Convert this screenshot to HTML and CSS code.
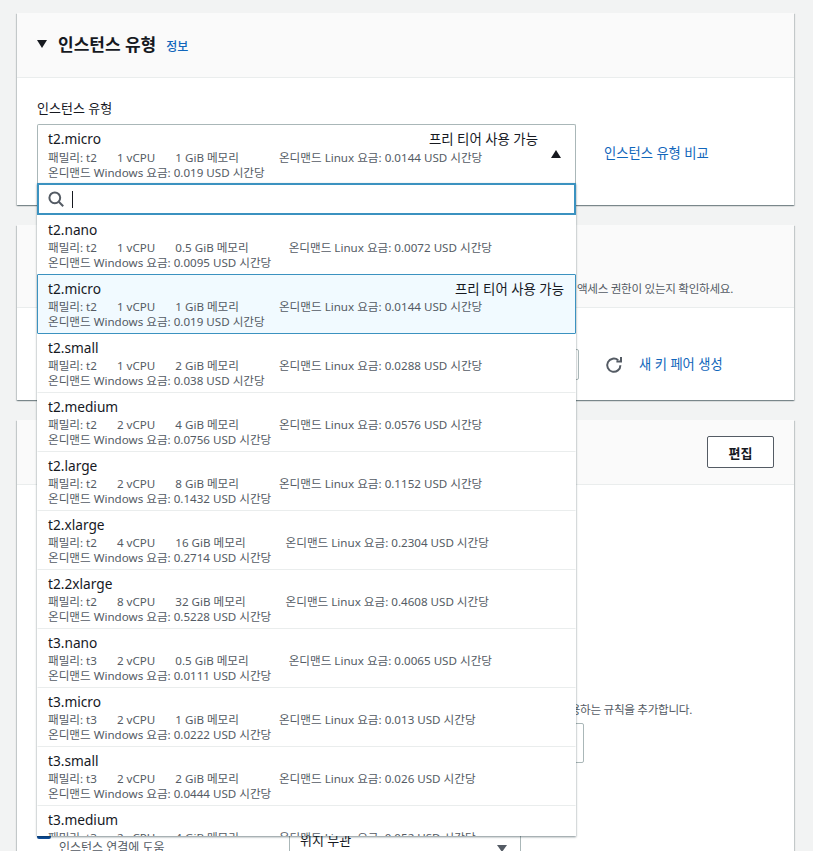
FILE: index.html
```html
<!DOCTYPE html>
<html lang="ko">
<head>
<meta charset="utf-8">
<title>인스턴스 유형</title>
<link rel="stylesheet" href="styles.css">
</head>
<body>
<main class="page">
  <section class="card card-type">
    <header class="card-head">
      <svg class="caret-title" viewBox="0 0 10 8" width="10" height="8"><path d="M0 0h10L5 8z"/></svg>
      <h2 class="card-title">인스턴스 유형</h2>
      <a class="info">정보</a>
    </header>
    <div class="card-body">
      <div class="label">인스턴스 유형</div>
      <div class="type-row">
        <div class="select-wrap">
          <div class="trigger">
            <div class="opt-top"><span class="opt-name">t2.micro</span><span class="free">프리 티어 사용 가능</span></div>
            <div class="opt-line"><span>패밀리: t2</span><span>1 vCPU</span><span class="mem">1 GiB 메모리</span><span>온디맨드 Linux 요금: 0.0144 USD 시간당</span></div>
            <div class="opt-line"><span>온디맨드 Windows 요금: 0.019 USD 시간당</span></div>
            <svg class="caret-up" viewBox="0 0 10 8" width="10" height="8"><path d="M5 0l5 8H0z"/></svg>
          </div>
          <div class="dropdown">
            <div class="search">
              <svg viewBox="0 0 16 16" width="16" height="16" fill="none" stroke="#545b64" stroke-width="2"><circle cx="6.8" cy="6.8" r="5.4"/><path d="M10.8 10.8l4.4 4.4"/></svg>
              <span class="cursor"></span>
            </div>
            <div class="list">
              <div class="opt"><div class="opt-top"><span class="opt-name">t2.nano</span></div><div class="opt-line"><span>패밀리: t2</span><span>1 vCPU</span><span class="mem">0.5 GiB 메모리</span><span>온디맨드 Linux 요금: 0.0072 USD 시간당</span></div><div class="opt-line"><span>온디맨드 Windows 요금: 0.0095 USD 시간당</span></div></div>
              <div class="opt selected"><div class="opt-top"><span class="opt-name">t2.micro</span><span class="free">프리 티어 사용 가능</span></div><div class="opt-line"><span>패밀리: t2</span><span>1 vCPU</span><span class="mem">1 GiB 메모리</span><span>온디맨드 Linux 요금: 0.0144 USD 시간당</span></div><div class="opt-line"><span>온디맨드 Windows 요금: 0.019 USD 시간당</span></div></div>
              <div class="opt"><div class="opt-top"><span class="opt-name">t2.small</span></div><div class="opt-line"><span>패밀리: t2</span><span>1 vCPU</span><span class="mem">2 GiB 메모리</span><span>온디맨드 Linux 요금: 0.0288 USD 시간당</span></div><div class="opt-line"><span>온디맨드 Windows 요금: 0.038 USD 시간당</span></div></div>
              <div class="opt"><div class="opt-top"><span class="opt-name">t2.medium</span></div><div class="opt-line"><span>패밀리: t2</span><span>2 vCPU</span><span class="mem">4 GiB 메모리</span><span>온디맨드 Linux 요금: 0.0576 USD 시간당</span></div><div class="opt-line"><span>온디맨드 Windows 요금: 0.0756 USD 시간당</span></div></div>
              <div class="opt"><div class="opt-top"><span class="opt-name">t2.large</span></div><div class="opt-line"><span>패밀리: t2</span><span>2 vCPU</span><span class="mem">8 GiB 메모리</span><span>온디맨드 Linux 요금: 0.1152 USD 시간당</span></div><div class="opt-line"><span>온디맨드 Windows 요금: 0.1432 USD 시간당</span></div></div>
              <div class="opt"><div class="opt-top"><span class="opt-name">t2.xlarge</span></div><div class="opt-line"><span>패밀리: t2</span><span>4 vCPU</span><span class="mem">16 GiB 메모리</span><span>온디맨드 Linux 요금: 0.2304 USD 시간당</span></div><div class="opt-line"><span>온디맨드 Windows 요금: 0.2714 USD 시간당</span></div></div>
              <div class="opt"><div class="opt-top"><span class="opt-name">t2.2xlarge</span></div><div class="opt-line"><span>패밀리: t2</span><span>8 vCPU</span><span class="mem">32 GiB 메모리</span><span>온디맨드 Linux 요금: 0.4608 USD 시간당</span></div><div class="opt-line"><span>온디맨드 Windows 요금: 0.5228 USD 시간당</span></div></div>
              <div class="opt"><div class="opt-top"><span class="opt-name">t3.nano</span></div><div class="opt-line"><span>패밀리: t3</span><span>2 vCPU</span><span class="mem">0.5 GiB 메모리</span><span>온디맨드 Linux 요금: 0.0065 USD 시간당</span></div><div class="opt-line"><span>온디맨드 Windows 요금: 0.0111 USD 시간당</span></div></div>
              <div class="opt"><div class="opt-top"><span class="opt-name">t3.micro</span></div><div class="opt-line"><span>패밀리: t3</span><span>2 vCPU</span><span class="mem">1 GiB 메모리</span><span>온디맨드 Linux 요금: 0.013 USD 시간당</span></div><div class="opt-line"><span>온디맨드 Windows 요금: 0.0222 USD 시간당</span></div></div>
              <div class="opt"><div class="opt-top"><span class="opt-name">t3.small</span></div><div class="opt-line"><span>패밀리: t3</span><span>2 vCPU</span><span class="mem">2 GiB 메모리</span><span>온디맨드 Linux 요금: 0.026 USD 시간당</span></div><div class="opt-line"><span>온디맨드 Windows 요금: 0.0444 USD 시간당</span></div></div>
              <div class="opt"><div class="opt-top"><span class="opt-name">t3.medium</span></div><div class="opt-line"><span>패밀리: t3</span><span>2 vCPU</span><span class="mem">4 GiB 메모리</span><span>온디맨드 Linux 요금: 0.052 USD 시간당</span></div><div class="opt-line"><span>온디맨드 Windows 요금: 0.0888 USD 시간당</span></div></div>
            </div>
          </div>
        </div>
        <a class="link type-link">인스턴스 유형 비교</a>
      </div>
    </div>
  </section>

  <section class="card card-key">
    <header class="card-head key-head">
      <h2 class="card-title">키 페어(로그인)</h2>
      <p class="key-desc">인스턴스를 시작하기 전에 선택한 키 페어에 대한 액세스 권한이 있는지 확인하세요.</p>
    </header>
    <div class="key-body">
      <div class="key-input"></div>
      <svg class="refresh" viewBox="0 0 18 18" width="18" height="18" fill="none" stroke="#545b64" stroke-width="2"><path d="M15.4 9.2a6.6 6.6 0 1 1-2.2-4.9"/><path d="M16 1v4.6h-4.6" stroke-width="2"/></svg>
      <a class="link">새 키 페어 생성</a>
    </div>
  </section>

  <section class="card card-net">
    <header class="card-head net-head">
      <h2 class="card-title">네트워크 설정</h2>
      <button class="edit">편집</button>
    </header>
    <div class="net-body">
      <p class="net-desc">특정 트래픽이 인스턴스에 도달하도록 허용하는 규칙을 추가합니다.</p>
      <div class="net-input"></div>
      <div class="net-row">
        <div class="net-check">
          <span class="checkbox"></span>
          <span class="check-label">인스턴스 연결에 도움</span>
        </div>
        <div class="net-select">
          <span class="net-value">위치 무관</span>
          <svg viewBox="0 0 10 7" width="10" height="7"><path d="M0 0h10L5 7z" fill="#545b64"/></svg>
        </div>
      </div>
    </div>
  </section>
</main>
</body>
</html>
```
FILE: styles.css
```css
* { box-sizing: border-box; }
html, body { margin: 0; height: 851px; overflow: hidden; }
body {
  background: #f2f3f3;
  color: #16191f;
  font-family: "Noto Sans", "Noto Sans CJK KR", sans-serif;
  font-size: 14px;
}
.page { padding: 13px 19px 0 17px; display: flex; flex-direction: column; gap: 20px; }
.card {
  background: #fff;
  box-shadow: 0 1px 1px 0 rgba(0,28,36,.3), 1px 1px 1px 0 rgba(0,28,36,.15), -1px 1px 1px 0 rgba(0,28,36,.15);
}
.card-head {
  background: #fafafa;
  border-bottom: 1px solid #eaeded;
  height: 65px;
  padding: 0 20px;
  display: flex;
  align-items: center;
}
.card-title { margin: 0; font-size: 17px; line-height: 22px; font-weight: 700; }
.caret-title { margin-right: 11px; margin-top: -3px; fill: #16191f; }
.info { margin: 2px 0 0 10px; font-size: 12px; font-weight: 500; color: #1166bb; }
.card-body { padding: 20px 20px 0; height: 127px; }
.label { font-size: 13px; line-height: 20px; margin-bottom: 6px; }
.type-row { display: flex; align-items: center; gap: 28px; }
.link { color: #1166bb; font-size: 13.3px; line-height: 18px; }
.type-link { margin-top: -2px; }
.select-wrap { position: relative; width: 539px; flex: none; }
.trigger {
  position: relative;
  height: 60px;
  border: 1px solid #aab7b8;
  border-bottom: none;
  border-radius: 2px 2px 0 0;
  padding: 4px 37px 0 10px;
  background: #fff;
}
.opt-top { display: flex; justify-content: space-between; align-items: center; height: 20px; }
.trigger .opt-top { height: 21px; align-items: flex-start; }
.opt-name { font-size: 13.7px; line-height: 20px; }
.free { font-size: 13.4px; line-height: 20px; }
.opt-line { display: flex; gap: 20px; font-size: 11.6px; line-height: 15px; color: #545b64; white-space: nowrap; }
.opt-line .mem { margin-right: 20px; }
.caret-up { position: absolute; right: 14px; top: 25px; fill: #16191f; }
.dropdown {
  position: absolute;
  left: 0;
  top: 59px;
  width: 539px;
  background: #fff;
  box-shadow: 0 1px 2px rgba(0,28,36,.5);
  z-index: 5;
}
.search {
  height: 32px;
  border: 2px solid #3b92c0;
  padding-left: 9px;
  display: flex;
  align-items: center;
  gap: 8px;
  background: #fff;
}
.cursor { display: block; width: 1px; height: 17px; background: #16191f; }
.list { height: 621px; padding-top: 1px; overflow: hidden; }
.opt {
  height: 59px;
  border-bottom: 1px solid #eaeded;
  border-left: 1px solid transparent;
  border-right: 1px solid transparent;
  padding: 4px 10px 0;
}
.opt.selected {
  background: #f1faff;
  border: 1px solid #3b92c0;
  border-radius: 1px;
  height: 60px;
  margin-top: -1px;
  padding-right: 11px;
}
.key-head {
  height: 83px;
  display: block;
  padding: 16px 20px 0;
}
.key-desc { margin: 18px 41px 0 0; font-size: 11.6px; line-height: 16px; letter-spacing: -.3px; text-align: right; color: #545b64; }
.key-body { height: 92px; padding: 41px 0 0 20px; display: flex; align-items: flex-start; }
.key-input { width: 542px; height: 31px; border: 1px solid #aab7b8; border-radius: 2px; flex: none; }
.refresh { margin: 7px 0 0 26px; flex: none; }
.key-body .link { margin: 6px 0 0 16px; }
.net-head { height: 65px; justify-content: space-between; padding-right: 20px; }
.edit {
  width: 67px;
  height: 32px;
  background: #fff;
  border: 1px solid #545b64;
  border-radius: 2px;
  font: 700 13px "Noto Sans", "Noto Sans CJK KR", sans-serif;
  color: #16191f;
  padding: 0;
}
.net-body { padding: 217px 0 0 20px; }
.net-desc { margin: 0 102px 0 0; font-size: 11.6px; line-height: 16px; letter-spacing: -.3px; text-align: right; color: #545b64; }
.net-input { width: 547px; height: 40px; margin-top: 5px; border: 1px solid #aab7b8; border-radius: 2px; }
.net-row { display: flex; margin-top: 62px; }
.net-check { width: 252px; flex: none; display: flex; flex-direction: column; }
.checkbox { display: block; width: 14px; height: 14px; background: #0f4f9e; border-radius: 2px; }
.check-label { font-size: 12px; line-height: 16px; margin: 1px 0 0 22px; color: #545b64; }
.net-select { width: 232px; height: 50px; border: 1px solid #aab7b8; padding: 5px 13px 0 10px; display: flex; justify-content: space-between; flex: none; }
.net-value { font-size: 13px; line-height: 18px; }
.net-select svg { margin-top: 14px; }
```
